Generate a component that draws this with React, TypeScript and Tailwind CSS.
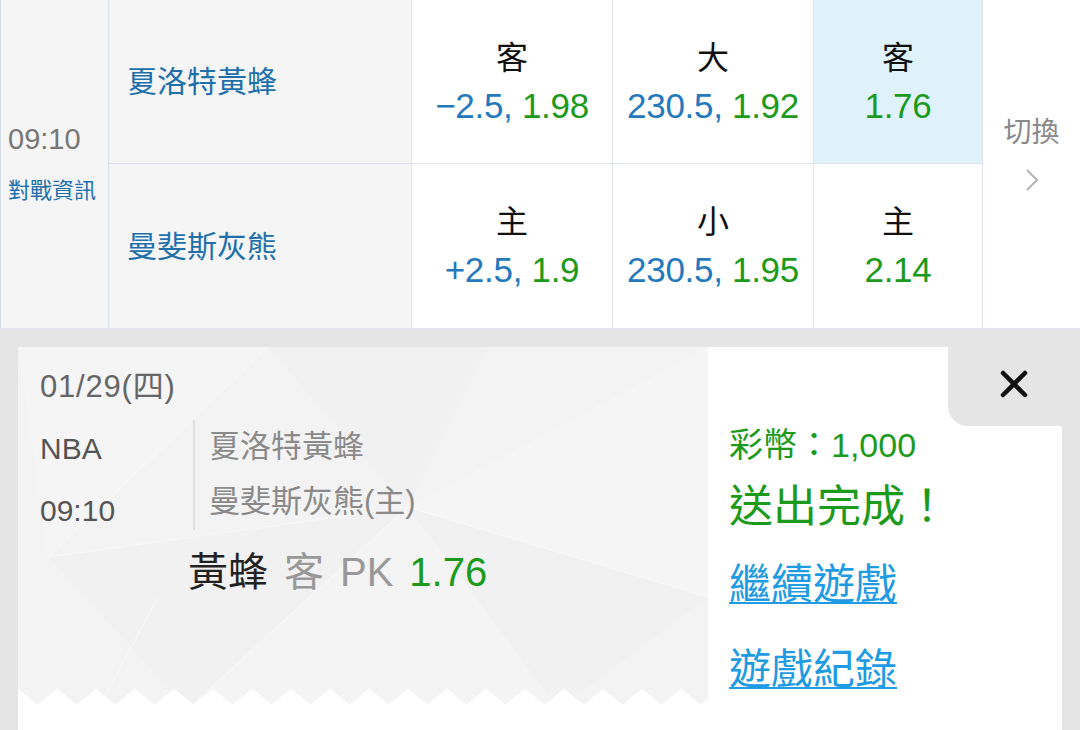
import React from "react";

const BLUE = "text-[#2479bd]";
const GREEN = "text-[#1b9a1b]";

type Odds = { label: string; line?: string; price: string; active?: boolean };

const ROWS: { team: string; odds: Odds[] }[] = [
  {
    team: "夏洛特黃蜂",
    odds: [
      { label: "客", line: "−2.5,", price: "1.98" },
      { label: "大", line: "230.5,", price: "1.92" },
      { label: "客", price: "1.76", active: true },
    ],
  },
  {
    team: "曼斐斯灰熊",
    odds: [
      { label: "主", line: "+2.5,", price: "1.9" },
      { label: "小", line: "230.5,", price: "1.95" },
      { label: "主", price: "2.14" },
    ],
  },
];

const CELL_W = ["w-[201px]", "w-[201px]", "w-[169px]"];

function OddsCell({ o, w }: { o: Odds; w: string }) {
  return (
    <div
      className={`${w} flex flex-col items-center justify-center border-r border-[#dde3e8] ${
        o.active ? "bg-[#dff2fc]" : "bg-white"
      }`}
    >
      <span className="text-[32px] leading-[48px] text-[#111]">{o.label}</span>
      <span className="text-[35px] leading-[48px] tracking-[-0.3px] whitespace-nowrap">
        {o.line && <span className={BLUE}>{o.line} </span>}
        <span className={GREEN}>{o.price}</span>
      </span>
    </div>
  );
}

function Texture() {
  // zigzag tear edge along the bottom of the ticket
  let edge = "M0,343";
  for (let x = 0; x < 690; x += 39) {
    edge += ` L${x + 19.5},359 L${x + 39},343`;
  }
  edge += " L700,343 L700,362 L0,362 Z";

  return (
    <svg className="absolute left-0 top-0" width="690" height="362" viewBox="0 0 690 362">
      <rect width="690" height="362" fill="#f3f3f3" />
      <polygon points="0,0 250,0 30,210" fill="#f5f5f5" />
      <polygon points="250,0 470,0 390,160" fill="#f1f1f1" />
      <polygon points="30,210 390,160 170,362" fill="#f1f1f1" />
      <polygon points="390,160 690,0 690,250" fill="#f5f5f5" />
      <polygon points="390,160 690,250 540,362" fill="#f1f1f1" />
      <polygon points="170,362 390,160 540,362" fill="#f4f4f4" />
      <g stroke="#f7f7f7" strokeWidth="1.5" fill="none">
        <line x1="30" y1="210" x2="250" y2="0" />
        <line x1="30" y1="210" x2="390" y2="160" />
        <line x1="390" y1="160" x2="690" y2="250" />
        <line x1="170" y1="362" x2="390" y2="160" />
        <line x1="80" y1="362" x2="140" y2="250" />
      </g>
      <path d={edge} fill="#ffffff" stroke="#ffffff" strokeWidth="2" strokeLinejoin="round" />
    </svg>
  );
}

export default function App() {
  return (
    <div className="w-[1080px] h-[730px] overflow-hidden bg-[#e5e5e5] font-['Liberation_Sans','Noto_Sans_CJK_TC',sans-serif]">
      {/* odds table */}
      <div className="flex h-[329px] border-b border-[#dde3e8] bg-white">
        <div className="w-[109px] flex flex-col justify-center border-l border-r border-[#d5dee5] bg-[#f5f5f5] pl-[7px]">
          <span className="text-[29px] leading-[30px] text-[#777]">09:10</span>
          <span className="mt-[23px] text-[22px] leading-[28px] text-[#1f6fab]">對戰資訊</span>
        </div>
        <div className="w-[874px] flex flex-col">
          {ROWS.map((r, i) => (
            <div
              key={r.team}
              className={`flex h-[164px] ${i === 0 ? "border-b border-[#dde3e8]" : ""}`}
            >
              <div className="w-[303px] flex items-center pl-[18px] border-r border-[#dde3e8] bg-[#f5f5f5]">
                <span className="text-[30px] text-[#1f6fab]">{r.team}</span>
              </div>
              {r.odds.map((o, j) => (
                <OddsCell key={j} o={o} w={CELL_W[j]} />
              ))}
            </div>
          ))}
        </div>
        <div className="flex-1 flex flex-col items-center pt-[115px]">
          <span className="text-[28px] leading-[36px] text-[#8a8a8a]">切換</span>
          <svg className="mt-[17px]" width="14" height="24" viewBox="0 0 14 24">
            <path d="M2 2 L12 12 L2 22" fill="none" stroke="#b3b3b3" strokeWidth="2" />
          </svg>
        </div>
      </div>

      {/* bet receipt */}
      <div className="px-[18px] pt-[18px]">
        <div className="flex h-[400px] bg-white">
          <div className="relative w-[690px] overflow-hidden">
            <Texture />
            <div className="relative pl-[22px] pt-[20px]">
              <div className="text-[31px] leading-[40px] tracking-[0.8px] text-[#666]">01/29(四)</div>
              <div className="mt-[13px] flex">
                <div className="w-[155px] h-[110px] border-r-2 border-[#dedede] flex flex-col">
                  <span className="mt-[9px] text-[30px] leading-[40px] text-[#555]">NBA</span>
                  <span className="mt-[22px] text-[30px] leading-[40px] text-[#555]">09:10</span>
                </div>
                <div className="pl-[14px] flex flex-col text-[31px] leading-[40px] text-[#8a8a8a]">
                  <span className="mt-[7px]">夏洛特黃蜂</span>
                  <span className="mt-[15px]">曼斐斯灰熊(主)</span>
                </div>
              </div>
              <div className="mt-[17px] pl-[148px] flex text-[40px] leading-[50px] whitespace-nowrap">
                <span className="text-[#222]">黃蜂</span>
                <span className="ml-[16px] text-[#999]">客</span>
                <span className="ml-[16px] text-[#999]">PK</span>
                <span className={`ml-[16px] ${GREEN}`}>1.76</span>
              </div>
            </div>
          </div>

          <div className="relative flex-1 flex flex-col pl-[21px] pt-[78px]">
            <button className="absolute right-0 top-0 w-[114px] h-[79px] rounded-bl-[20px] bg-[#e5e5e5] flex items-start pl-[52px] pt-[23px]">
              <svg width="28" height="28" viewBox="0 0 28 28">
                <path d="M3 3 L25 25 M25 3 L3 25" stroke="#111" strokeWidth="4.5" strokeLinecap="round" />
              </svg>
            </button>
            <span className={`text-[34px] leading-[40px] ${GREEN}`}>彩幣：1,000</span>
            <span className={`mt-[14px] text-[44px] leading-[56px] ${GREEN}`}>送出完成！</span>
            <a className="mt-[24px] self-start text-[42px] leading-[52px] text-[#1e9be3] underline decoration-2 underline-offset-[3px]">
              繼續遊戲
            </a>
            <a className="mt-[33px] self-start text-[42px] leading-[52px] text-[#1e9be3] underline decoration-2 underline-offset-[3px]">
              遊戲紀錄
            </a>
          </div>
        </div>
      </div>
    </div>
  );
}
